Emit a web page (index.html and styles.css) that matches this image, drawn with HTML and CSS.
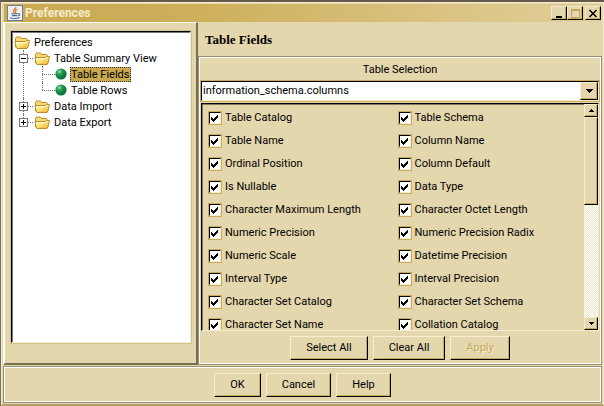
FILE: index.html
```html
<!DOCTYPE html>
<html lang="en">
<head>
<meta charset="utf-8">
<title>Preferences</title>
<link rel="stylesheet" href="styles.css">
</head>
<body>
<svg width="0" height="0" class="defs" aria-hidden="true">
  <defs>
    <linearGradient id="gold" x1="0" y1="0" x2="1" y2="1">
      <stop offset="0" stop-color="#fffbc4"/><stop offset=".5" stop-color="#fbe177"/><stop offset="1" stop-color="#dfa92f"/>
    </linearGradient>
    <radialGradient id="green" cx=".35" cy=".3" r=".75">
      <stop offset="0" stop-color="#8fdcaa"/><stop offset=".35" stop-color="#219a50"/><stop offset="1" stop-color="#08642c"/>
    </radialGradient>
    <symbol id="folder" viewBox="0 0 16 14">
      <path d="M1.5 12V3.5l1-1.5h4l1 1.5h5l1 1V12z" fill="#f6d873" stroke="#b98d2b"/>
      <path d="M1 6.5h10.5l1-1h3L14 12l-1 1.5H3L2 12z" fill="url(#gold)" stroke="#b98d2b"/>
      <path d="M2 7.5h10l1-1h1.4" fill="none" stroke="#fffde0"/>
    </symbol>
    <symbol id="ball" viewBox="0 0 12 12"><circle cx="6" cy="6" r="5.6" fill="url(#green)"/></symbol>
  </defs>
</svg>
<div class="window">
  <header class="titlebar">
    <svg class="java" viewBox="0 0 16 16" aria-hidden="true">
      <rect width="16" height="16" fill="#6d7f96"/><rect x="1" y="1" width="14" height="14" fill="#edf0f2"/>
      <path d="M8.7 2c1 2-3 2.6-2.2 4.6.2.7 1 1 1.2 1.7M10.3 4.2C8.6 5 8 5.5 8.6 6.4c.4.6.3 1.2-.1 1.8" fill="none" stroke="#e07328" stroke-width="1.2"/>
      <path d="M4.3 8.8h6.5M5 10.6h5.2M3 12.7c2.6.9 7.4.9 9.6-.2M11 8.9c2.2-.7 2.3 1.5.1 2" fill="none" stroke="#49698c" stroke-width="1.1"/>
    </svg>
    <h1>Preferences</h1>
    <div class="winbtns">
      <button type="button" aria-label="Minimize"><svg viewBox="0 0 10 9"><path d="M2 7h6v2H2z"/></svg></button>
      <button type="button" aria-label="Maximize" disabled><svg viewBox="0 0 10 9"><path d="M1 0h9v9H1zM2 2v6h7V2z" fill="#c4a45b" fill-rule="evenodd"/></svg></button>
      <button type="button" aria-label="Close" class="close"><svg viewBox="0 0 10 9"><path d="M1.5 1l7 7M8.5 1l-7 7" stroke="#000" stroke-width="1.5"/></svg></button>
    </div>
  </header>
  <main class="content">
    <nav class="side">
      <div class="tree">
        <a class="node" href="#root"><svg class="folder"><use href="#folder"/></svg><span>Preferences</span></a>
        <ul>
          <li><div class="row"><button type="button" class="toggle" aria-label="Collapse"><svg viewBox="0 0 9 9"><path d="M2 4h5v1H2z"/></svg></button><a class="node" href="#summary"><svg class="folder"><use href="#folder"/></svg><span>Table Summary View</span></a></div>
            <ul class="leaves">
              <li><a class="node" href="#fields"><svg class="ball"><use href="#ball"/></svg><span class="selected">Table Fields</span></a></li>
              <li><a class="node" href="#rows"><svg class="ball"><use href="#ball"/></svg><span>Table Rows</span></a></li>
            </ul>
          </li>
          <li><div class="row"><button type="button" class="toggle" aria-label="Expand"><svg viewBox="0 0 9 9"><path d="M2 4h5v1H2zM4 2h1v5H4z"/></svg></button><a class="node" href="#import"><svg class="folder"><use href="#folder"/></svg><span>Data Import</span></a></div></li>
          <li><div class="row"><button type="button" class="toggle" aria-label="Expand"><svg viewBox="0 0 9 9"><path d="M2 4h5v1H2zM4 2h1v5H4z"/></svg></button><a class="node" href="#export"><svg class="folder"><use href="#folder"/></svg><span>Data Export</span></a></div></li>
        </ul>
      </div>
    </nav>
    <section class="detail">
      <h2>Table Fields</h2>
      <div class="group">
        <label class="caption" for="table">Table Selection</label>
        <div class="combo">
          <select id="table"><option>information_schema.columns</option></select>
          <span class="drop"><svg viewBox="0 0 7 4"><path d="M0 0h7v1H6v1H5v1H4v1H3V3H2V2H1V1H0z"/></svg></span>
        </div>
        <div class="scroller">
          <div class="fields">
            <label><input type="checkbox" checked>Table Catalog</label>
            <label><input type="checkbox" checked>Table Schema</label>
            <label><input type="checkbox" checked>Table Name</label>
            <label><input type="checkbox" checked>Column Name</label>
            <label><input type="checkbox" checked>Ordinal Position</label>
            <label><input type="checkbox" checked>Column Default</label>
            <label><input type="checkbox" checked>Is Nullable</label>
            <label><input type="checkbox" checked>Data Type</label>
            <label><input type="checkbox" checked>Character Maximum Length</label>
            <label><input type="checkbox" checked>Character Octet Length</label>
            <label><input type="checkbox" checked>Numeric Precision</label>
            <label><input type="checkbox" checked>Numeric Precision Radix</label>
            <label><input type="checkbox" checked>Numeric Scale</label>
            <label><input type="checkbox" checked>Datetime Precision</label>
            <label><input type="checkbox" checked>Interval Type</label>
            <label><input type="checkbox" checked>Interval Precision</label>
            <label><input type="checkbox" checked>Character Set Catalog</label>
            <label><input type="checkbox" checked>Character Set Schema</label>
            <label><input type="checkbox" checked>Character Set Name</label>
            <label><input type="checkbox" checked>Collation Catalog</label>
          </div>
          <div class="scrollbar">
            <button type="button" aria-label="Scroll up"><svg viewBox="0 0 5 3"><path d="M2 0h1v1h1v1h1v1H0V2h1V1h1z"/></svg></button>
            <div class="track"><div class="thumb"></div></div>
            <button type="button" aria-label="Scroll down"><svg viewBox="0 0 5 3"><path d="M0 0h5v1H4v1H3v1H2V2H1V1H0z"/></svg></button>
          </div>
        </div>
        <div class="actions">
          <button type="button" class="btn">Select All</button>
          <button type="button" class="btn">Clear All</button>
          <button type="button" class="btn" disabled>Apply</button>
        </div>
      </div>
    </section>
  </main>
  <footer class="footer">
    <button type="button" class="btn">OK</button>
    <button type="button" class="btn">Cancel</button>
    <button type="button" class="btn">Help</button>
  </footer>
</div>
</body>
</html>
```
FILE: styles.css
```css
:root {
  --face: #e4d6ad;
  --light: #f6edcf;
  --shade: #c8ab5c;
  --dark: #857b60;
}
* { box-sizing: border-box; }
body {
  margin: 0;
  height: 100vh;
  border-top: 2px solid #66584a;
  border-left: 1px solid #77705a;
  background: #b5a268;
  color: #000;
  font: 11px/16px Roboto, Tahoma, sans-serif;
}
.defs { position: absolute; }
button, select, input { margin: 0; font: inherit; color: inherit; }
a { color: inherit; text-decoration: none; }
svg { display: block; flex: none; }
ul { margin: 0; padding: 0; list-style: none; }

.window {
  display: flex;
  flex-direction: column;
  height: 100%;
  padding: 1px;
  border: 1px solid var(--light);
  border-right-color: #f3ead0;
  border-bottom: 2px solid #b19f67;
  background: var(--face);
}
.titlebar {
  display: flex;
  align-items: center;
  flex: none;
  height: 18px;
  margin: 0 1px;
  padding-left: 3px;
  background: linear-gradient(90deg, #caa951 0, #cdae59 30%, #e2d09b 100%);
}
.java { width: 16px; height: 16px; }
.titlebar h1 {
  flex: 1;
  margin: 0;
  padding-left: 2px;
  color: #f5ecce;
  font-size: 12px;
  font-weight: 700;
}
.winbtns { display: flex; }
.winbtns button, .scrollbar button, .drop {
  display: flex;
  align-items: center;
  justify-content: center;
  padding: 0;
  border: 1px solid;
  border-color: var(--light) #000 #000 var(--light);
  background: var(--face);
  box-shadow: inset -1px -1px var(--shade);
}
.winbtns button { width: 16px; height: 14px; }
.winbtns .close { margin-left: 2px; }
.winbtns svg { width: 10px; height: 9px; }

.content { display: flex; flex: 1; min-height: 0; }
.side {
  flex: 0 0 195px;
  padding: 8px 5px 20px 6px;
  border: 2px solid;
  border-color: #fff #777052 #777052 #fff;
  border-top-width: 1px;
}
.tree {
  height: 100%;
  padding: 2px 0 0 2px;
  border: 1px solid;
  border-color: #000 var(--light) var(--light) #000;
  outline: 1px solid #d3c291;
  outline-offset: 0;
  background: #fff;
  box-shadow: inset 1px 1px #777;
}
.node { display: flex; align-items: center; height: 16px; }
.node span { padding: 0 1px; line-height: 15px; white-space: nowrap; }
.node .selected { background: #caa951; outline: 1px dotted #333; outline-offset: -1px; }
.folder { width: 16px; height: 14px; margin-right: 3px; }
.row .folder { margin-left: 1px; }
.ball { width: 12px; height: 12px; margin-right: 3px; }
.tree li { position: relative; }
.tree > ul { padding-left: 5px; }
.tree > ul > li::before {
  content: "";
  position: absolute;
  left: 4px;
  top: 0;
  bottom: 0;
  border-left: 1px dotted #777;
}
.tree > ul > li:last-child::before { bottom: 8px; }
.row { display: flex; align-items: center; }
.row::before { content: ""; order: 1; width: 5px; border-top: 1px dotted #777; }
.row .node { order: 2; }
.toggle {
  position: relative;
  width: 9px;
  height: 9px;
  padding: 0;
  border: 0;
  background: #fff;
  box-shadow: inset 0 0 0 1px #777;
}
.toggle svg { width: 9px; height: 9px; }
.leaves { padding-left: 23px; }
.leaves li::before {
  content: "";
  position: absolute;
  left: 0;
  top: 0;
  bottom: 0;
  border-left: 1px dotted #777;
}
.leaves li:last-child::before { bottom: 8px; }
.leaves .node::before { content: ""; width: 13px; border-top: 1px dotted #777; }

.detail { display: flex; flex-direction: column; flex: 1; min-width: 0; }
.detail h2 {
  flex: none;
  margin: 0;
  padding: 10px 7px 8px;
  font: 700 13px/16px "Liberation Serif", serif;
}
.group {
  display: flex;
  flex-direction: column;
  flex: 1;
  min-height: 0;
  padding: 5px 2px 4px 2px;
  border: 1px solid #9a8f70;
  box-shadow: inset 1px 1px #fff, inset -1px -1px #fff;
}
.caption { padding-bottom: 3px; text-align: center; }
.combo {
  position: relative;
  flex: none;
  height: 20px;
  border: 1px solid;
  border-color: #000 var(--light) var(--light) #000;
  outline: 1px solid var(--shade);
  outline-offset: 0;
}
.combo select {
  display: block;
  width: 100%;
  height: 100%;
  padding: 0 20px 0 1px;
  border: 0;
  border-radius: 0;
  appearance: none;
  background: #fff;
}
.drop {
  position: absolute;
  top: 0;
  right: 0;
  bottom: 0;
  width: 18px;
  pointer-events: none;
}
.drop svg { width: 7px; height: 4px; }
.scroller {
  display: flex;
  flex: 1;
  min-height: 0;
  margin-top: 2px;
  border: 1px solid;
  border-color: #000 var(--light) var(--light) #000;
  overflow: hidden;
}
.fields {
  display: grid;
  grid-template-columns: 1fr 1fr;
  grid-auto-rows: 23px;
  flex: 1;
  padding: 1px 0 0 6px;
  border: 1px solid var(--dark);
  border-width: 1px 0 0 1px;
  overflow: hidden;
}
.fields label { display: flex; align-items: center; gap: 4px; white-space: nowrap; }
.fields label:nth-child(even) { padding-left: 2px; }
.fields input {
  width: 12px;
  height: 12px;
  border: 1px solid;
  border-color: #000 var(--light) var(--light) #000;
  outline: 1px solid var(--shade);
  outline-offset: 0;
  appearance: none;
  background: #fff;
}
.fields input:checked {
  background: #fff url("data:image/svg+xml,%3Csvg xmlns='http://www.w3.org/2000/svg' viewBox='0 0 10 10'%3E%3Cpath d='M1 4h1v1h1v1h1V5h1V4h1V3h1V2h1v3H7v1H6v1H5v1H4v1H3V8H2V7H1z'/%3E%3C/svg%3E") center / 10px 10px no-repeat;
}
.scrollbar { display: flex; flex-direction: column; flex: 0 0 14px; }
.scrollbar button { flex: none; width: 14px; height: 13px; }
.scrollbar svg { width: 5px; height: 3px; }
.track { flex: 1; background: repeating-conic-gradient(#fff 0 25%, #efe6cb 0 50%) 0 0 / 2px 2px; }
.thumb {
  height: 44%;
  border: 1px solid;
  border-color: var(--light) #000 #000 var(--light);
  background: var(--face);
  box-shadow: inset -1px -1px var(--shade);
}
.actions { display: flex; flex: none; justify-content: center; gap: 5px; padding-top: 5px; }
.btn {
  height: 24px;
  padding: 0 15px;
  border: 1px solid;
  border-color: var(--light) #000 #000 var(--light);
  background: var(--face);
  box-shadow: inset -1px -1px var(--shade);
  white-space: nowrap;
}
.btn:disabled { color: #c4a95a; text-shadow: 1px 1px #f6edcf; }
.footer {
  display: flex;
  flex: none;
  justify-content: center;
  gap: 5px;
  margin-top: 1px;
  padding: 6px 0 5px;
  border: 1px solid #9a8f70;
  box-shadow: inset 1px 1px #fff, inset -1px -1px #fff;
}
```
